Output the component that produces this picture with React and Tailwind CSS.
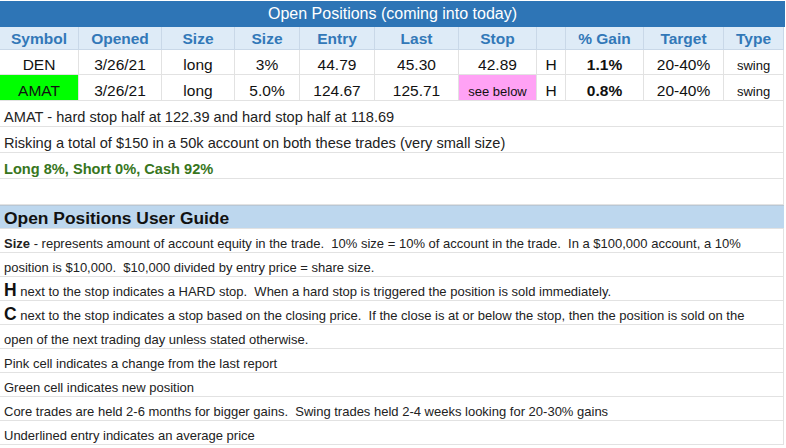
import React from 'react';

const cols = "grid grid-cols-[79px_83px_73px_65px_75px_84px_78px_29px_78px_80px_60px]";

const headers = ["Symbol", "Opened", "Size", "Size", "Entry", "Last", "Stop", "", "% Gain", "Target", "Type"];

const positions = [
    { symbol: "DEN", opened: "3/26/21", side: "long", size: "3%", entry: "44.79", last: "45.30", stop: "42.89", flag: "H", gain: "1.1%", target: "20-40%", type: "swing" },
    { symbol: "AMAT", opened: "3/26/21", side: "long", size: "5.0%", entry: "124.67", last: "125.71", stop: "see below", flag: "H", gain: "0.8%", target: "20-40%", type: "swing", isNew: true, stopChanged: true },
];

function Cell({ children, className = "" }) {
    return (
        <div className={`flex items-end justify-center pb-0 border-r border-b border-[#e2e2e2] whitespace-nowrap ${className}`}>
            {children}
        </div>
    );
}

function NoteRow({ children, className = "" }) {
    return (
        <div className={`h-[26px] flex items-end pl-[4px] pb-0 border-r border-b border-[#e2e2e2] text-[14.6px] whitespace-pre ${className}`}>
            {children}
        </div>
    );
}

function GuideRow({ children }) {
    return (
        <div className="h-[24px] flex items-end pl-[4px] pb-0 border-r border-b border-[#e2e2e2] text-[13px] text-[#222] whitespace-pre">
            {children}
        </div>
    );
}

export default function App() {
    return (
        <div className="w-[786px] h-[448px] overflow-hidden bg-white text-black leading-[1.15] font-['Liberation_Sans',Arial,sans-serif]">
            {/* title */}
            <div className="mt-px w-[785px] h-[26px] bg-[#2e75b6] text-white text-[16px] flex items-center justify-center">
                Open Positions (coming into today)
            </div>

            <div className="w-[784px]">
                {/* header row */}
                <div className={`${cols} h-[23px] bg-[#deebf7]`}>
                    {headers.map((h, i) => (
                        <div key={i} className="flex items-center justify-center pt-[2px] border-r border-b border-[#c9d8e8] text-[15.5px] font-bold text-[#3278b8]">
                            {h}
                        </div>
                    ))}
                </div>

                {/* positions */}
                {positions.map((p, i) => (
                    <div key={p.symbol} className={`${cols} ${i === 0 ? "h-[25px]" : "h-[26px]"} text-[15.5px] text-[#111]`}>
                        <Cell className={p.isNew ? "bg-[#00ff00]" : ""}>{p.symbol}</Cell>
                        <Cell>{p.opened}</Cell>
                        <Cell>{p.side}</Cell>
                        <Cell>{p.size}</Cell>
                        <Cell>{p.entry}</Cell>
                        <Cell>{p.last}</Cell>
                        <Cell className={p.stopChanged ? "bg-[#ffa2f5] text-[13px]" : ""}>{p.stop}</Cell>
                        <Cell>{p.flag}</Cell>
                        <Cell className="font-bold">{p.gain}</Cell>
                        <Cell>{p.target}</Cell>
                        <Cell className="text-[13px]">{p.type}</Cell>
                    </div>
                ))}

                {/* notes */}
                <NoteRow className="text-[#222]">AMAT - hard stop half at 122.39 and hard stop half at 118.69</NoteRow>
                <NoteRow className="text-[#222]">Risking a total of $150 in a 50k account on both these trades (very small size)</NoteRow>
                <NoteRow className="font-bold text-[#38761d]">Long 8%, Short 0%, Cash 92%</NoteRow>
                <NoteRow />

                {/* user guide */}
                <div className="h-[24px] flex items-end pl-[4px] pb-0 border-t border-[#b7c7d6] bg-[#bdd7ee] border-b border-b-[#e2e2e2] text-[17.4px] font-bold text-[#111]">
                    Open Positions User Guide
                </div>
                <GuideRow><b>Size</b> - represents amount of account equity in the trade.  10% size = 10% of account in the trade.  In a $100,000 account, a 10%</GuideRow>
                <GuideRow>position is $10,000.  $10,000 divided by entry price = share size.</GuideRow>
                <GuideRow><b className="text-[17.5px] text-[#111]">H</b> next to the stop indicates a HARD stop.  When a hard stop is triggered the position is sold immediately.</GuideRow>
                <GuideRow><b className="text-[17.5px] text-[#111]">C</b> next to the stop indicates a stop based on the closing price.  If the close is at or below the stop, then the position is sold on the</GuideRow>
                <GuideRow>open of the next trading day unless stated otherwise.</GuideRow>
                <GuideRow>Pink cell indicates a change from the last report</GuideRow>
                <GuideRow>Green cell indicates new position</GuideRow>
                <GuideRow>Core trades are held 2-6 months for bigger gains.  Swing trades held 2-4 weeks looking for 20-30% gains</GuideRow>
                <GuideRow>Underlined entry indicates an average price</GuideRow>
            </div>
        </div>
    );
}
